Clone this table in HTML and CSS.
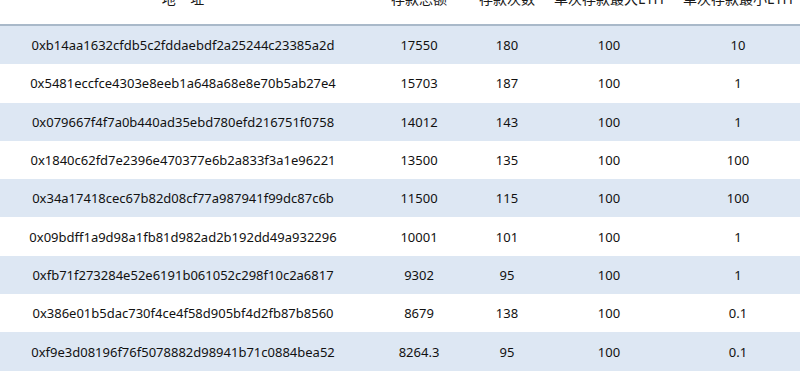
FILE: index.html
```html
<!DOCTYPE html>
<html lang="zh-CN">
<head>
    <meta charset="UTF-8">
    <meta name="viewport" content="width=device-width, initial-scale=1.0">
    <title>存款排行</title>
    <link rel="stylesheet" href="styles.css">
</head>
<body>

    <table class="deposit-table">
        <thead>
            <tr>
                <th class="col-address">地&nbsp;&nbsp;&nbsp;&nbsp;址</th>
                <th class="col-total">存款总额</th>
                <th class="col-count">存款次数</th>
                <th class="col-max">单次存款最大ETH</th>
                <th class="col-min">单次存款最小ETH</th>
            </tr>
        </thead>
        <tbody>
            <tr>
                <td>0xb14aa1632cfdb5c2fddaebdf2a25244c23385a2d</td>
                <td>17550</td>
                <td>180</td>
                <td>100</td>
                <td>10</td>
            </tr>
            <tr>
                <td>0x5481eccfce4303e8eeb1a648a68e8e70b5ab27e4</td>
                <td>15703</td>
                <td>187</td>
                <td>100</td>
                <td>1</td>
            </tr>
            <tr>
                <td>0x079667f4f7a0b440ad35ebd780efd216751f0758</td>
                <td>14012</td>
                <td>143</td>
                <td>100</td>
                <td>1</td>
            </tr>
            <tr>
                <td>0x1840c62fd7e2396e470377e6b2a833f3a1e96221</td>
                <td>13500</td>
                <td>135</td>
                <td>100</td>
                <td>100</td>
            </tr>
            <tr>
                <td>0x34a17418cec67b82d08cf77a987941f99dc87c6b</td>
                <td>11500</td>
                <td>115</td>
                <td>100</td>
                <td>100</td>
            </tr>
            <tr>
                <td>0x09bdff1a9d98a1fb81d982ad2b192dd49a932296</td>
                <td>10001</td>
                <td>101</td>
                <td>100</td>
                <td>1</td>
            </tr>
            <tr>
                <td>0xfb71f273284e52e6191b061052c298f10c2a6817</td>
                <td>9302</td>
                <td>95</td>
                <td>100</td>
                <td>1</td>
            </tr>
            <tr>
                <td>0x386e01b5dac730f4ce4f58d905bf4d2fb87b8560</td>
                <td>8679</td>
                <td>138</td>
                <td>100</td>
                <td>0.1</td>
            </tr>
            <tr>
                <td>0xf9e3d08196f76f5078882d98941b71c0884bea52</td>
                <td>8264.3</td>
                <td>95</td>
                <td>100</td>
                <td>0.1</td>
            </tr>
        </tbody>
    </table>

</body>
</html>
```

FILE: styles.css
```css
body {
    margin: 0;
    background-color: #fff;
    font-family: "Noto Sans", "Noto Sans CJK SC", sans-serif;
    color: #111;
    overflow: hidden;
}

.deposit-table {
    width: 800px;
    margin-top: -28px;
    border-collapse: collapse;
    table-layout: fixed;
}

th, td {
    padding: 0;
    text-align: center;
    white-space: nowrap;
}

th {
    height: 52px;
    font-size: 14px;
    font-weight: normal;
    color: #1a1a1a;
    border-bottom: 2px solid #a9b9c9;
}

td {
    height: 38.3px;
    font-size: 13px;
}

tbody tr:nth-child(odd) {
    background-color: #dde7f3;
}

.col-address { width: 366px; }
.col-total { width: 106px; }
.col-count { width: 70px; }
.col-max { width: 134px; }
.col-min { width: 124px; }
```
